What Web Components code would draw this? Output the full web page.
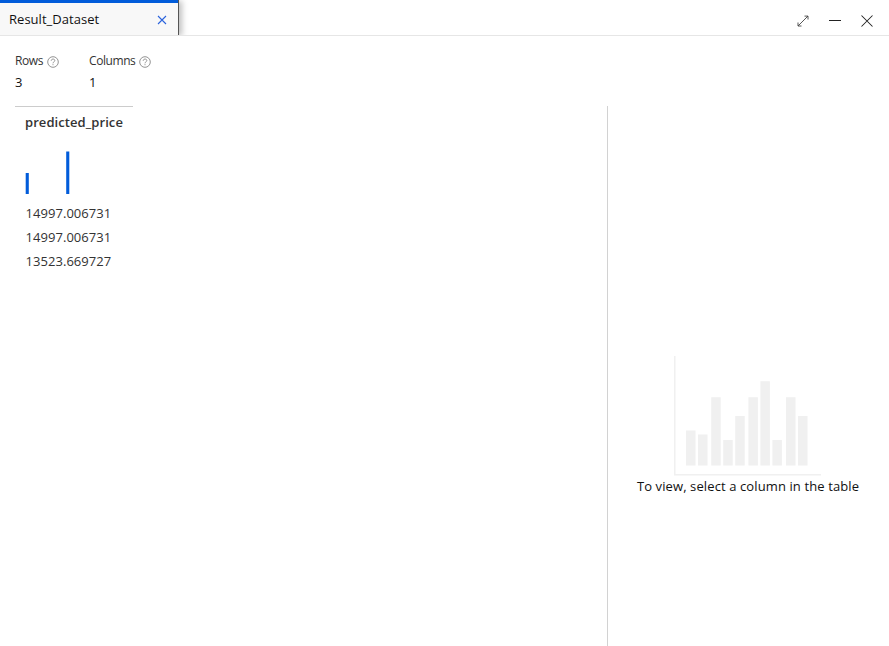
<!DOCTYPE html>
<html lang="en">
<head>
<meta charset="utf-8">
<title>Result_Dataset</title>
<style>
html,body{margin:0;height:100%;background:#fff;overflow:hidden}
body{font-family:"Open Sans","Noto Sans",sans-serif;font-size:13px;color:#111}
</style>
</head>
<body>
<result-viewer></result-viewer>
<script>
const define = (name, html) => customElements.define(name, class extends HTMLElement {
  constructor() {
    super();
    this.attachShadow({mode: 'open'}).innerHTML = html;
  }
});

define('dataset-tab', `<style>
:host{box-sizing:border-box;display:flex;justify-content:space-between;align-items:center;width:179px;height:35px;padding:3px 11px 0 9px;background:linear-gradient(#015cda 3px,#f8f8f8 3px);border-right:1px solid #555;box-shadow:3px 1px 6px rgba(0,0,0,.25);clip-path:inset(0 -12px 0 0)}
span{line-height:18px;margin-top:-1px;letter-spacing:.03px}
svg{display:block;margin-top:1px}
</style><span><slot></slot></span>
<svg width="10" height="10" viewBox="0 0 10 10" fill="none" stroke="#2b63dc" stroke-width="1.1"><path d="M1 1 9 9M9 1 1 9"/></svg>`);

define('window-controls', `<style>
:host{display:flex;gap:18px;padding:14px 15px 0 0}
svg{display:block}
</style>
<svg width="14" height="14" viewBox="0 0 14 14" fill="none" stroke="#444" stroke-width=".9"><path d="M2 12 12 2M8.5 2.1H12V5.5M2 8.5V12H5.5"/></svg>
<svg width="14" height="14" viewBox="0 0 14 14" fill="none" stroke="#222" stroke-width="1"><path d="M1 6.5H13"/></svg>
<svg width="14" height="14" viewBox="0 0 14 14" fill="none" stroke="#222" stroke-width="1.05"><path d="M1.5 1.5 12.5 12.5M12.5 1.5 1.5 12.5"/></svg>`);

define('count-stat', `<style>
:host{display:block}
.label{display:flex;align-items:center;gap:4px;font-size:12px;line-height:18px;color:#333;letter-spacing:-.42px}
.value{line-height:20px;margin-top:2px;color:#111}
svg{display:block;margin-top:1px}
</style><div class="label"><slot name="label"></slot>
<svg width="12" height="12" viewBox="0 0 12 12" fill="none" stroke="#888" stroke-width=".9"><circle cx="6" cy="6" r="5.3"/><path d="M4.2 4.8C4.2 2.5 7.8 2.5 7.8 4.6 7.8 5.8 6 5.8 6 7.3M6 8.2V9.2"/></svg></div>
<div class="value"><slot></slot></div>`);

define('data-column', `<style>
:host{box-sizing:border-box;display:block;width:118px;margin-left:15px;border-top:1px solid #ccc;padding:5px 0 0 10px;color:#333}
.head{font-weight:600;line-height:20px;letter-spacing:.07px}
svg{display:block;margin:19px 0 7px}
</style><div class="head"><slot name="title"></slot></div>
<svg width="60" height="43" viewBox="0 0 60 43" fill="#015cda"><path d="M.7 22H3.8V43H.7ZM41.2.5H44.3V43H41.2Z"/></svg>
<slot></slot>`);

define('data-cell', `<style>:host{display:block;line-height:24px;padding-left:.5px;letter-spacing:.05px}</style><slot></slot>`);

define('empty-chart', `<style>
:host{box-sizing:border-box;display:flex;flex-direction:column;align-items:center;width:282px;border-left:1px solid #d2d2d2;padding:250px 1px 0 0}
svg{display:block}
span{line-height:20px;color:#111;white-space:nowrap;letter-spacing:.11px}
</style>
<svg width="148" height="120" viewBox="0 0 148 120" fill="#f0f0f0"><path d="M0 0H1.5V118H147V119.5H0Z"/>
<path d="M12 74.5h9.5V109.5H12ZM24 78.5h9.5v31H24ZM37.2 41.3h9.5v68.2h-9.5ZM49.2 84h9.5v25.5h-9.5ZM61.2 60h9.5v49.5h-9.5ZM74.4 41.3h9.5v68.2h-9.5ZM86.4 25.2h9.5v84.3h-9.5ZM98.4 84h9.5v25.5h-9.5ZM112 41.3h9.5v68.2H112ZM124 60h9.5v49.5H124Z"/></svg>
<span><slot></slot></span>`);

define('result-viewer', `<style>
:host{display:flex;flex-direction:column;height:100vh}
header{box-sizing:border-box;display:flex;justify-content:space-between;height:36px;border-bottom:1px solid #e6e6e6}
.stats{display:grid;grid-template-columns:74px auto;justify-content:start;padding:16px 15px 0;height:54px}
main{display:flex;justify-content:space-between;flex:1}
</style>
<header><dataset-tab>Result_Dataset</dataset-tab><window-controls></window-controls></header>
<div class="stats">
<count-stat><span slot="label">Rows</span>3</count-stat>
<count-stat><span slot="label">Columns</span>1</count-stat>
</div>
<main>
<data-column><span slot="title">predicted_price</span><data-cell>14997.006731</data-cell><data-cell>14997.006731</data-cell><data-cell>13523.669727</data-cell></data-column>
<empty-chart>To view, select a column in the table</empty-chart>
</main>`);
</script>
</body>
</html>
